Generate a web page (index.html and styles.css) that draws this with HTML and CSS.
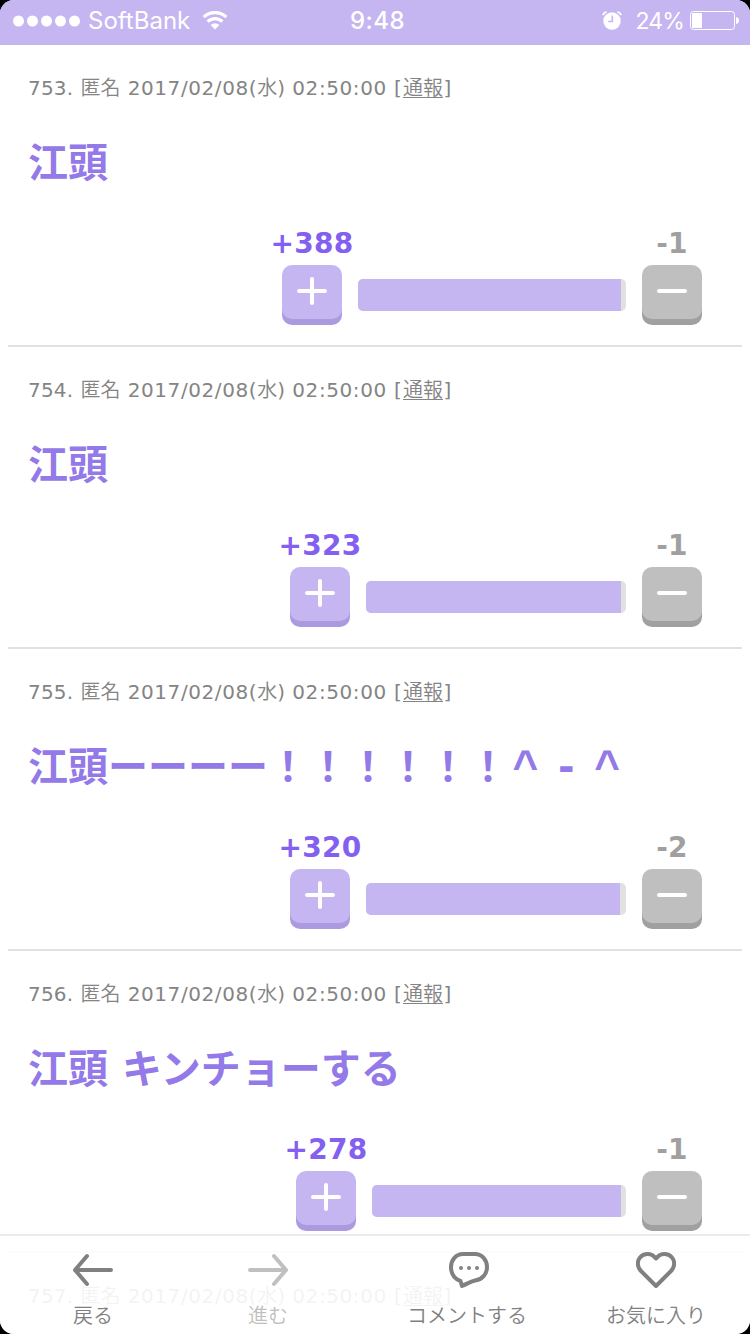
FILE: index.html
```html
<!DOCTYPE html>
<html lang="ja">
<head>
    <meta charset="UTF-8">
    <meta name="viewport" content="width=device-width, initial-scale=1.0">
    <title>コメント</title>
    <link rel="stylesheet" href="styles.css">
</head>
<body>
    <div class="screen">
        <header class="status-bar">
            <div class="status-left">
                <svg class="signal" width="68" height="12" viewBox="0 0 68 12" fill="#fff">
                    <circle cx="5.5" cy="6" r="5.5"/>
                    <circle cx="19.5" cy="6" r="5.5"/>
                    <circle cx="33.5" cy="6" r="5.5"/>
                    <circle cx="47.5" cy="6" r="5.5"/>
                    <circle cx="61.5" cy="6" r="5.5"/>
                </svg>
                <span class="carrier">SoftBank</span>
                <svg class="wifi" width="26" height="19" viewBox="0 0 26 19" fill="none" stroke="#fff" stroke-width="3.2">
                    <path d="M1.7 6.2 A16 16 0 0 1 24.3 6.2"/>
                    <path d="M5.6 10.6 A10.5 10.5 0 0 1 20.4 10.6"/>
                    <path d="M13 18.4 L8.6 14 A6.2 6.2 0 0 1 17.4 14 Z" fill="#fff" stroke="none"/>
                </svg>
            </div>
            <div class="time">9:48</div>
            <div class="status-right">
                <svg class="alarm" width="20" height="19" viewBox="0 0 20 19">
                    <circle cx="10" cy="10" r="8.7" fill="#fff"/>
                    <path d="M0.8 4.2 Q1.8 1.4 4.6 0.9 M19.2 4.2 Q18.2 1.4 15.4 0.9" stroke="#fff" stroke-width="1.6" fill="none"/>
                    <path d="M10.3 4.6 V10.5 H6.2" stroke="#c5b6f1" stroke-width="1.6" fill="none"/>
                </svg>
                <span class="percent">24%</span>
                <svg class="battery" width="49" height="19" viewBox="0 0 49 19">
                    <rect x="0.5" y="0.5" width="44" height="18" rx="3" fill="none" stroke="#fff"/>
                    <rect x="2" y="2" width="10" height="15" rx="1" fill="#fff"/>
                    <path d="M46 6 Q49 6.5 49 9.5 Q49 12.500 46 13 Z" fill="#fff"/>
                </svg>
            </div>
        </header>

        <main class="comments">
            <article class="comment">
                <p class="meta">753. <span class="jp">匿名</span> <span class="date">2017/02/08(</span><span class="jp">水</span>) <span class="date">02:50:00</span> [<a class="jp" href="#">通報</a>]</p>
                <h2 class="body">江頭</h2>
                <div class="votes">
                    <div class="vote plus">
                        <span class="count">+388</span>
                        <button><svg width="30" height="30" viewBox="0 0 30 30"><path d="M2 15 H28 M15 3 V27"/></svg></button>
                    </div>
                    <div class="bar" style="width: 268px"><div class="fill" style="width: 263px"></div></div>
                    <div class="vote minus">
                        <span class="count">-1</span>
                        <button><svg width="30" height="30" viewBox="0 0 30 30"><path d="M2 15 H28"/></svg></button>
                    </div>
                </div>
            </article>

            <article class="comment">
                <p class="meta">754. <span class="jp">匿名</span> <span class="date">2017/02/08(</span><span class="jp">水</span>) <span class="date">02:50:00</span> [<a class="jp" href="#">通報</a>]</p>
                <h2 class="body">江頭</h2>
                <div class="votes">
                    <div class="vote plus">
                        <span class="count">+323</span>
                        <button><svg width="30" height="30" viewBox="0 0 30 30"><path d="M2 15 H28 M15 3 V27"/></svg></button>
                    </div>
                    <div class="bar" style="width: 260px"><div class="fill" style="width: 255px"></div></div>
                    <div class="vote minus">
                        <span class="count">-1</span>
                        <button><svg width="30" height="30" viewBox="0 0 30 30"><path d="M2 15 H28"/></svg></button>
                    </div>
                </div>
            </article>

            <article class="comment">
                <p class="meta">755. <span class="jp">匿名</span> <span class="date">2017/02/08(</span><span class="jp">水</span>) <span class="date">02:50:00</span> [<a class="jp" href="#">通報</a>]</p>
                <h2 class="body">江頭ーーーー！！！！！！<span class="caret">^</span> <span class="mouth">-</span> <span class="caret">^</span></h2>
                <div class="votes">
                    <div class="vote plus">
                        <span class="count">+320</span>
                        <button><svg width="30" height="30" viewBox="0 0 30 30"><path d="M2 15 H28 M15 3 V27"/></svg></button>
                    </div>
                    <div class="bar" style="width: 260px"><div class="fill" style="width: 254px"></div></div>
                    <div class="vote minus">
                        <span class="count">-2</span>
                        <button><svg width="30" height="30" viewBox="0 0 30 30"><path d="M2 15 H28"/></svg></button>
                    </div>
                </div>
            </article>

            <article class="comment">
                <p class="meta">756. <span class="jp">匿名</span> <span class="date">2017/02/08(</span><span class="jp">水</span>) <span class="date">02:50:00</span> [<a class="jp" href="#">通報</a>]</p>
                <h2 class="body">江頭 キンチョーする</h2>
                <div class="votes">
                    <div class="vote plus">
                        <span class="count">+278</span>
                        <button><svg width="30" height="30" viewBox="0 0 30 30"><path d="M2 15 H28 M15 3 V27"/></svg></button>
                    </div>
                    <div class="bar" style="width: 254px"><div class="fill" style="width: 249px"></div></div>
                    <div class="vote minus">
                        <span class="count">-1</span>
                        <button><svg width="30" height="30" viewBox="0 0 30 30"><path d="M2 15 H28"/></svg></button>
                    </div>
                </div>
            </article>

            <article class="comment">
                <p class="meta">757. <span class="jp">匿名</span> <span class="date">2017/02/08(</span><span class="jp">水</span>) <span class="date">02:50:00</span> [<a class="jp" href="#">通報</a>]</p>
            </article>
        </main>

        <nav class="toolbar">
            <a class="tool">
                <svg width="40" height="36" viewBox="0 0 40 36"><path d="M38 18 H2 M14 4 L2 18 L14 32"/></svg>
                <span>戻る</span>
            </a>
            <a class="tool forward">
                <svg width="40" height="36" viewBox="0 0 40 36"><path d="M2 18 H38 M26 4 L38 18 L26 32"/></svg>
                <span>進む</span>
            </a>
            <a class="tool write">
                <svg width="40" height="36" viewBox="0 0 40 36">
                    <path d="M14 2 H26 C33 2 38 8 38 15 C38 22 33 28 26 28.500 C21 29.500 18 32 13 34 L11.500 29 C6 27 2 22 2 15 C2 8 7 2 14 2 Z"/>
                    <g class="dots"><circle cx="12" cy="16" r="2"/><circle cx="20" cy="16" r="2"/><circle cx="28" cy="16" r="2"/></g>
                </svg>
                <span>コメントする</span>
            </a>
            <a class="tool">
                <svg width="40" height="36" viewBox="0 0 40 36"><path d="M20 34 L5 19 C1 15 1 9 4 5.500 C8 1 15 1 18.500 5 L20 6.500 L21.500 5 C25 1 32 1 36 5.500 C39 9 39 15 35 19 Z"/></svg>
                <span>お気に入り</span>
            </a>
        </nav>
    </div>
</body>
</html>
```
FILE: styles.css
```css
body {
    margin: 0;
    background: #000;
    font-family: "DejaVu Sans", "Noto Sans CJK JP", sans-serif;
}

.screen {
    position: relative;
    height: 1334px;
    background: #fff;
    border-radius: 14px;
    overflow: hidden;
}

/* status bar */
.status-bar {
    display: flex;
    align-items: center;
    height: 45px;
    padding: 0 11px 4px 13px;
    box-sizing: border-box;
    background: #c5b6f1;
    color: #fff;
    font-family: Inter, sans-serif;
    font-size: 24px;
    line-height: 30px;
}

.status-left, .status-right {
    display: flex;
    align-items: center;
    flex: 1;
}

.status-right {
    justify-content: flex-end;
}

.carrier {
    margin: 0 12px 0 7px;
    font-size: 24px;
}

.time {
    padding-left: 3px;
    font-weight: 500;
    letter-spacing: 0.5px;
}

.percent {
    margin: 0 6px 0 14px;
    font-size: 23px;
    letter-spacing: -0.9px;
}

/* comments */
.comments {
    padding: 0 8px;
}

.comment {
    height: 302px;
    padding: 28px 40px 0 20px;
    box-sizing: border-box;
    border-bottom: 2px solid #e1e1e1;
}

.meta {
    margin: 0;
    color: #848484;
    font-size: 20px;
    line-height: 30px;
    letter-spacing: 0.2px;
    word-spacing: 0.6px;
    white-space: nowrap;
}

.date {
    letter-spacing: 0.58px;
}

.jp {
    color: inherit;
    font-family: "Noto Sans CJK JP", sans-serif;
    font-weight: 350;
    line-height: 1;
    letter-spacing: 0;
}

.meta a {
    margin: 0 0.5px 0 1px;
    text-underline-offset: 2px;
    text-decoration-thickness: 1px;
}

.body {
    margin: 30px 0 0;
    height: 60px;
    color: #9479e8;
    font-size: 40px;
    line-height: 60px;
    white-space: nowrap;
}

.caret {
    margin: 0 4.5px;
    font-family: "Liberation Sans", sans-serif;
    font-size: 44px;
    line-height: 1;
}

.mouth {
    margin: 0 1.3px;
}

.votes {
    display: flex;
    justify-content: flex-end;
    margin-top: 32px;
}

.vote {
    display: flex;
    flex-direction: column;
    align-items: center;
    width: 60px;
}

.count {
    height: 38px;
    padding-top: 2px;
    font-size: 28px;
    font-weight: bold;
    line-height: 34px;
    letter-spacing: 0.3px;
    white-space: nowrap;
}

.plus .count {
    color: #8460f0;
}

.minus .count {
    color: #a0a0a0;
}

.vote button {
    display: flex;
    justify-content: center;
    width: 60px;
    height: 54px;
    margin: 0;
    padding: 11px 0 0;
    border: none;
    border-radius: 10px;
}

.plus button {
    background: #c5b6f1;
    box-shadow: 0 6px 0 #ac9ae0;
}

.minus button {
    background: #bfbfbf;
    box-shadow: 0 6px 0 #a0a0a0;
}

.vote svg {
    fill: none;
    stroke: #fff;
    stroke-width: 4;
    stroke-linecap: round;
}

.bar {
    height: 32px;
    margin: 54px 16px 0;
    border-radius: 5px;
    background: #e1e1e1;
    overflow: hidden;
}

.fill {
    height: 32px;
    background: #c5b6f1;
}

/* bottom toolbar over the list */
.toolbar {
    position: absolute;
    left: 0;
    right: 0;
    bottom: 0;
    display: grid;
    grid-template-columns: 186px 164px 234px 144px;
    height: 100px;
    box-sizing: border-box;
    border-top: 2px solid #ebebeb;
    background: rgba(255, 255, 255, 0.9);
    color: #808080;
    font-family: "Noto Sans CJK JP", sans-serif;
    font-size: 20px;
    font-weight: 350;
}

.tool {
    display: flex;
    flex-direction: column;
    align-items: center;
    padding-top: 16px;
}

.tool span {
    margin-top: 12px;
    line-height: 30px;
    white-space: nowrap;
}

.tool svg {
    fill: none;
    stroke: #808080;
    stroke-width: 4;
    stroke-linecap: round;
    stroke-linejoin: round;
}

.tool .dots {
    fill: #808080;
    stroke: none;
}

.forward {
    color: #c0c0c0;
}

.forward svg {
    stroke: #c0c0c0;
}

.write svg {
    margin-left: 4px;
}
```
